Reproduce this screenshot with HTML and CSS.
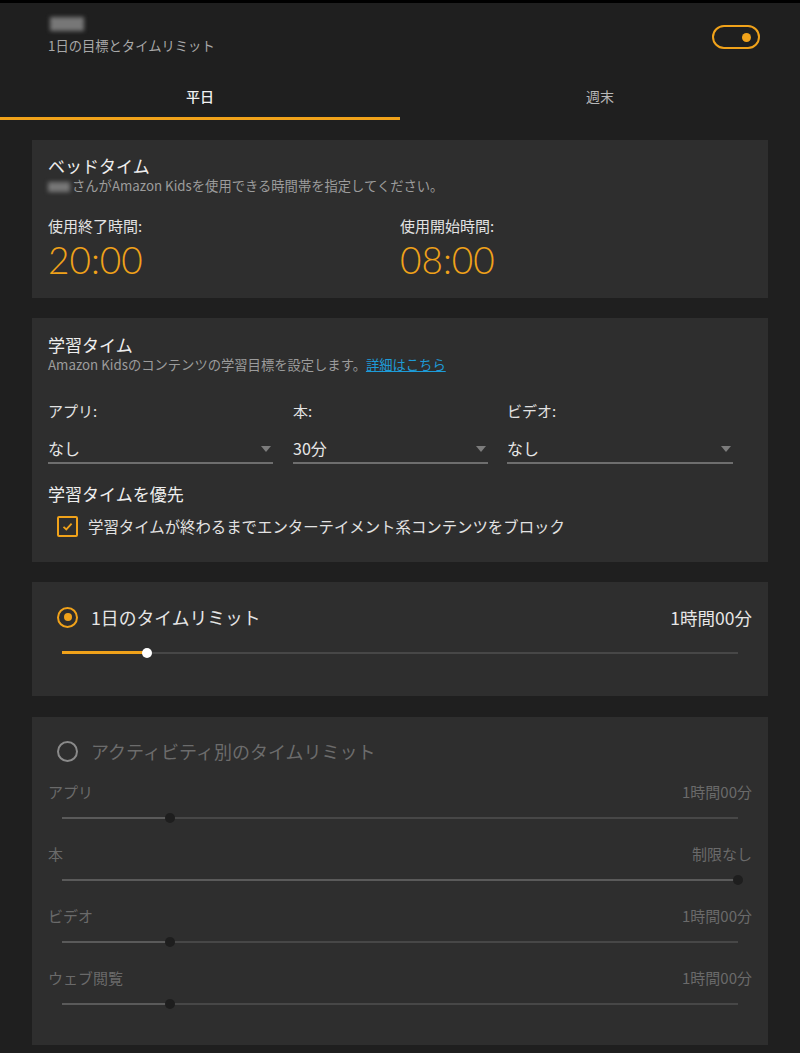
FILE: index.html
```html
<!DOCTYPE html>
<html lang="ja">
<head>
    <meta charset="UTF-8">
    <meta name="viewport" content="width=device-width, initial-scale=1.0">
    <title>1日の目標とタイムリミット</title>
    <link rel="stylesheet" href="styles.css">
</head>
<body>
    <div class="header">
        <div class="header-text">
            <span class="blur-name"></span>
            <div class="header-sub">1日の目標とタイムリミット</div>
        </div>
        <div class="toggle"><span class="toggle-dot"></span></div>
    </div>

    <div class="tabs">
        <div class="tab active">平日</div>
        <div class="tab">週末</div>
    </div>

    <div class="card bedtime">
        <div class="card-title">ベッドタイム</div>
        <div class="card-sub"><span class="blur-inline"></span>さんがAmazon Kidsを使用できる時間帯を指定してください。</div>
        <div class="time-row">
            <div class="time-col">
                <div class="field-label">使用終了時間:</div>
                <div class="time-value">20:00</div>
            </div>
            <div class="time-col">
                <div class="field-label">使用開始時間:</div>
                <div class="time-value">08:00</div>
            </div>
        </div>
    </div>

    <div class="card study">
        <div class="card-title">学習タイム</div>
        <div class="card-sub">Amazon Kidsのコンテンツの学習目標を設定します。<a href="#" class="link">詳細はこちら</a></div>
        <div class="select-row">
            <div class="select-col col-app">
                <div class="field-label">アプリ:</div>
                <div class="select">なし<span class="caret"></span></div>
            </div>
            <div class="select-col col-book">
                <div class="field-label">本:</div>
                <div class="select">30分<span class="caret"></span></div>
            </div>
            <div class="select-col col-video">
                <div class="field-label">ビデオ:</div>
                <div class="select">なし<span class="caret"></span></div>
            </div>
        </div>
        <div class="card-title priority">学習タイムを優先</div>
        <label class="check-row">
            <span class="checkbox">
                <svg width="13" height="13" viewBox="0 0 13 13"><path d="M2.5 6.8 L5.3 9.4 L10.6 3.6" fill="none" stroke="#f0a21a" stroke-width="1.8"/></svg>
            </span>
            学習タイムが終わるまでエンターテイメント系コンテンツをブロック
        </label>
    </div>

    <div class="card daily">
        <div class="radio-row">
            <span class="radio on"><span class="radio-dot"></span></span>
            <span class="radio-label">1日のタイムリミット</span>
            <span class="radio-value">1時間00分</span>
        </div>
        <div class="slider active-slider">
            <div class="track"></div>
            <div class="fill" style="width: 12.6%"></div>
            <div class="thumb" style="left: 12.6%"></div>
        </div>
    </div>

    <div class="card activity">
        <div class="radio-row">
            <span class="radio off"></span>
            <span class="radio-label">アクティビティ別のタイムリミット</span>
        </div>

        <div class="act-row">
            <span>アプリ</span><span>1時間00分</span>
        </div>
        <div class="slider dim-slider">
            <div class="track"></div>
            <div class="fill" style="width: 16%"></div>
            <div class="thumb" style="left: 16%"></div>
        </div>

        <div class="act-row">
            <span>本</span><span>制限なし</span>
        </div>
        <div class="slider dim-slider">
            <div class="track"></div>
            <div class="fill" style="width: 100%"></div>
            <div class="thumb" style="left: 100%"></div>
        </div>

        <div class="act-row">
            <span>ビデオ</span><span>1時間00分</span>
        </div>
        <div class="slider dim-slider">
            <div class="track"></div>
            <div class="fill" style="width: 16%"></div>
            <div class="thumb" style="left: 16%"></div>
        </div>

        <div class="act-row">
            <span>ウェブ閲覧</span><span>1時間00分</span>
        </div>
        <div class="slider dim-slider">
            <div class="track"></div>
            <div class="fill" style="width: 16%"></div>
            <div class="thumb" style="left: 16%"></div>
        </div>
    </div>
</body>
</html>
```

FILE: styles.css
```css
body { margin: 0; background-color: #1f1f1f; border-top: 3px solid #000; font-family: "Noto Sans CJK JP", "Noto Sans", sans-serif; color: #e6e6e6; }

.header { display: flex; justify-content: space-between; align-items: flex-start; height: 72px; padding: 0 40px 0 48px; }
.header-text { padding-top: 14px; }
.blur-name { display: block; width: 34px; height: 14px; background-color: #777; filter: blur(2px); margin-left: 2px; }
.header-sub { font-size: 13.3px; line-height: 18px; color: #a8a8a8; margin-top: 6px; }
.toggle { height: 20px; border: 2px solid #f0a21a; border-radius: 12px; margin-top: 22px; display: flex; align-items: center; justify-content: flex-end; padding-right: 7px; box-sizing: content-box; width: 37px; }
.toggle-dot { width: 9px; height: 9px; border-radius: 50%; background-color: #f0a21a; }

.tabs { display: flex; }
.tab { flex: 1; text-align: center; font-size: 14px; height: 42px; line-height: 42px; color: #b8b8b8; border-bottom: 3px solid transparent; }
.tab.active { color: #f2f2f2; font-weight: 500; border-bottom-color: #f0a21a; }

.card { background-color: #2e2e2e; margin: 20px 32px 0; padding: 14px 16px 18px; }

.card-title { font-size: 17px; line-height: 24px; color: #eeeeee; }
.card-sub { font-size: 13.3px; line-height: 16px; color: #9c9c9c; }
.blur-inline { display: inline-block; width: 22px; height: 10px; background-color: #777; filter: blur(2px); vertical-align: middle; margin-right: 2px; }
.link { color: #1e9bd7; text-decoration: underline; }

.field-label { font-size: 15px; line-height: 20px; color: #e2e2e2; }

.time-row { display: flex; margin-top: 22px; }
.time-col { flex: 1; }
.time-value { font-size: 37px; line-height: 46px; font-weight: 300; color: #f0a21a; margin-top: 1px; margin-bottom: -3px; font-family: Lato, "Noto Sans", sans-serif; }

.study { padding: 15px 16px 24px; }
.select-row { display: flex; margin-top: 28px; }
.col-app { width: 225px; margin-right: 20px; }
.col-book { width: 195px; margin-right: 19px; }
.col-video { width: 226px; }
.select { position: relative; font-size: 16px; line-height: 24px; margin-top: 15px; padding-bottom: 2px; border-bottom: 2px solid #6e6e6e; color: #e6e6e6; }
.caret { position: absolute; right: 2px; top: 10px; width: 0; height: 0; border-left: 5px solid transparent; border-right: 5px solid transparent; border-top: 6px solid #7c7c7c; }

.priority { margin-top: 18px; }
.check-row { display: flex; align-items: center; gap: 10px; margin-top: 8px; margin-left: 9px; font-size: 15.4px; line-height: 24px; color: #e2e2e2; }
.checkbox { width: 17px; height: 17px; border: 2px solid #f0a21a; border-radius: 2px; display: flex; align-items: center; justify-content: center; }

.radio-row { display: flex; align-items: center; height: 24px; }
.radio { width: 17px; height: 17px; border-radius: 50%; margin-left: 9px; margin-right: 13px; display: flex; align-items: center; justify-content: center; }
.radio.on { border: 2px solid #f0a21a; }
.radio.off { border: 2px solid #8a8a8a; }
.radio-dot { width: 8px; height: 8px; border-radius: 50%; background-color: #f0a21a; }
.radio-label { font-size: 17.8px; flex: 1; }
.radio-value { font-size: 17.5px; color: #e6e6e6; }

.daily { padding: 23px 16px 37px; }
.activity { margin-top: 21px; padding: 22px 16px 35px; }
.activity .radio-label { color: #6c6c6c; font-size: 18px; }

.slider { position: relative; height: 12px; margin: 0 14px; }
.slider .track { position: absolute; left: 0; right: 0; top: 5px; height: 2px; background-color: #474747; }
.slider .fill { position: absolute; left: 0; top: 5px; height: 2px; }
.slider .thumb { position: absolute; top: 1px; width: 10px; height: 10px; margin-left: -5px; border-radius: 50%; }
.active-slider { margin-top: 18px; }
.active-slider .fill { height: 3px; top: 4px; background-color: #f0a21a; }
.active-slider .thumb { background-color: #ffffff; }
.dim-slider { margin-top: 10px; }
.dim-slider .fill { background-color: #5a5a5a; }
.dim-slider .thumb { background-color: #1e1e1e; }

.act-row { display: flex; justify-content: space-between; font-size: 15px; line-height: 20px; color: #6a6a6a; margin-top: 19px; }
.act-row + .slider + .act-row { margin-top: 20px; }
```
